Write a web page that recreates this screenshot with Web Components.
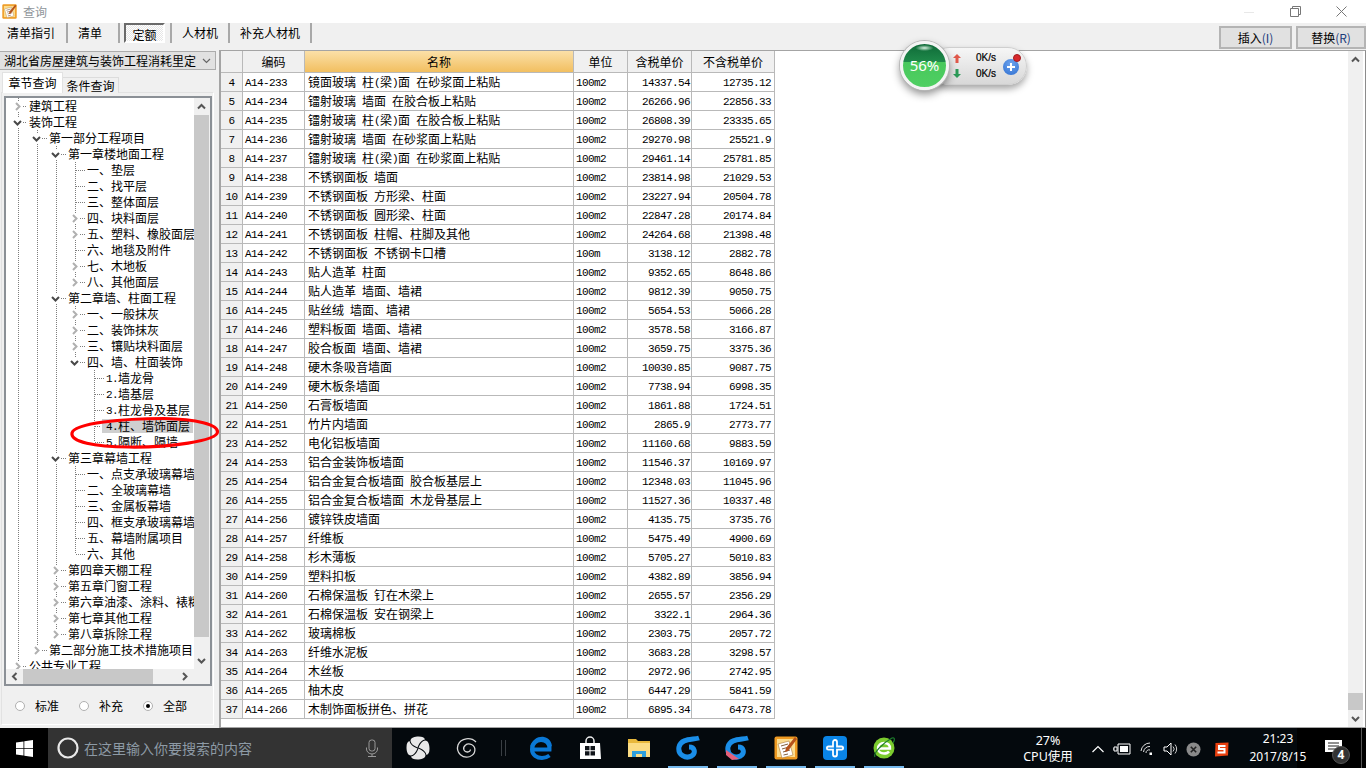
<!DOCTYPE html>
<html lang="zh"><head><meta charset="utf-8"><title>查询</title>
<style>
html,body{margin:0;padding:0;width:1366px;height:768px;overflow:hidden;background:#f0f0f0}
body{position:relative;display:flex;flex-direction:column;font:12px "Noto Sans CJK SC","Liberation Sans",sans-serif;color:#000}
</style></head><body>
<win-title></win-title>
<tool-bar></tool-bar>
<main-area></main-area>
<task-bar></task-bar>
<net-widget></net-widget>
<script>
const def=(name,html,init)=>customElements.define(name,class extends HTMLElement{
  constructor(){super();this.attachShadow({mode:'open'}).innerHTML=html;init&&init(this.shadowRoot,this)}
});
const chev=(d,c,w=2)=>{const p={d:'M1 3 4.5 6.5 8 3',u:'M1 6.5 4.5 3 8 6.5',r:'M3 1 6.5 4.5 3 8',l:'M6.5 1 3 4.5 6.5 8'}[d];
 return `<svg width="9" height="9" viewBox="0 0 9 9"><path d="${p}" fill="none" stroke="${c}" stroke-width="${w}"/></svg>`};
const esc=s=>s.replace(/[\x00-\x7f]+/g,m=>`<span class="l">${m}</span>`);
const latin=`.l{font-family:"Liberation Mono",monospace;font-size:11px;letter-spacing:-.6px;white-space:pre;vertical-align:1px;line-height:1}`;
const noteIcon=s=>`<svg width="${s}" height="${s}" viewBox="0 0 24 24"><rect x="0.5" y="0.5" width="23" height="23" rx="2" fill="#ee9a22"/><rect x="3" y="3" width="18" height="18" fill="#fbdc8e"/><path d="M4 8 15 5 19 19 8 22z" fill="#fff" stroke="#a87838" stroke-width=".6"/><path d="M7 10 14 8M8 13 15 11M9 16 16 14M9.5 19 14 18" stroke="#806040" stroke-width="1"/><path d="M21 1 23 3 14 15 11 16 12 12z" fill="#b5521b"/></svg>`;

def('win-title',`<style>
:host{display:flex;align-items:center;height:23px;background:#fff;flex:none}
.i{margin-left:2px;display:flex}.t{margin-left:6px;color:#8f959a;font-size:12px}
.c{margin-left:auto;display:flex;align-items:center;height:23px}
.c span{display:flex;width:46px;justify-content:center}
</style><span class="i">${noteIcon(15)}</span><span class="t">查询</span>
<div class="c"><span><svg width="10" height="10"><path d="M0 5.5H10" stroke="#e8e8e8"/></svg></span>
<span><svg width="11" height="11"><path d="M2.5 2.5V.5H10.5V8.5H8.5M.5 2.5H8.5V10.5H.5Z" fill="none" stroke="#777"/></svg></span>
<span style="margin-right:2px"><svg width="11" height="11"><path d="M.5.5 10.5 10.5M10.5.5.5 10.5" stroke="#777"/></svg></span></div>`);

def('tool-bar',`<style>
:host{display:flex;height:27px;background:#f0f0f0;flex:none;font-size:12px}
.it{box-sizing:border-box;height:20px;border-right:2px solid #a8a8a8;line-height:20px;white-space:nowrap}
.pr{box-sizing:border-box;width:41px;height:20px;margin-left:4px;text-align:center;line-height:20px;border:2px solid;border-color:#6a6a6a #fff #fff #6a6a6a;background:repeating-conic-gradient(#fff 0 25%,#e6e6e6 0 50%) 0 0/2px 2px}
.b{box-sizing:border-box;height:23px;margin-top:3px;border:2px solid #b4b4b4;background:#e1e1e1;text-align:center;line-height:19px}
.b b{font-weight:400;color:#1c3c7c}
</style>
<div class="it" style="width:68px;padding-left:7px">清单指引</div>
<div class="it" style="width:52px;padding-left:10px">清单</div>
<div class="it" style="width:52px"><div class="pr">定额</div></div>
<div class="it" style="width:58px;padding-left:10px">人材机</div>
<div class="it" style="width:82px;padding-left:10px">补充人材机</div>
<div class="b" style="width:73px;margin-left:907px">插入<b>(I)</b></div>
<div class="b" style="width:70px;margin-left:4px">替换<b>(R)</b></div>`);

def('main-area',`<style>:host{display:flex;height:678px;flex:none}</style><left-panel></left-panel><data-pane></data-pane>`);

def('left-panel',`<style>
:host{display:block;position:relative;width:219px;flex:none;background:#f0f0f0;height:678px}
.sel{box-sizing:border-box;width:216px;height:19px;margin-top:1px;background:#e1e1e1;border:1px solid #acacac;border-left:0;display:flex;align-items:center;padding-left:4px;white-space:nowrap}
.sel svg{margin-left:6px}
.tabs{display:flex;margin:2px 0 0 2px;height:21px;align-items:flex-end}
.tab{box-sizing:border-box;text-align:center}
.a{width:61px;height:21px;background:#fff;line-height:20px;border:1px solid #e2e2e2;border-bottom:0;position:relative;z-index:1}
.n{width:56px;height:16px;background:#f0f0f0;line-height:15px;border:1px solid #dcdcdc;border-left:0;border-bottom:0}
.page{box-sizing:border-box;width:213px;margin-left:1px;margin-top:-1px;height:633px;border:1px solid #e2e2e2;border-bottom-color:#fff;border-right-color:#fff;padding:3px 0 0 2px;background:#f0f0f0}
.rad{display:flex;height:39px;align-items:center;padding-left:11px}
.ring{position:absolute;left:69px;top:366px;z-index:5;display:block}
</style>
<div class="sel"><span>湖北省房屋建筑与装饰工程消耗里定</span>${chev('d','#666',1.2)}</div>
<div class="tabs"><div class="tab a">章节查询</div><div class="tab n">条件查询</div></div>
<div class="page"><tree-box></tree-box>
<div class="rad"><radio-opt>标准</radio-opt><radio-opt>补充</radio-opt><radio-opt checked>全部</radio-opt></div></div>
<svg class="ring" width="152" height="34"><path d="M3 17C5 7 55 2.500 95 2.500 128 3 149 9 148.500 16 148 25 100 31.500 60 31 25 30.500 1.500 26 3 17Z" fill="none" stroke="#f00" stroke-width="3.200"/></svg>`);

def('radio-opt',`<style>
:host{display:flex;align-items:center;width:64px}
.c{box-sizing:border-box;width:10px;height:10px;border:1px solid #b0b0b0;border-radius:50%;background:#fff;display:flex;align-items:center;justify-content:center;margin-right:10px}
.d{width:4px;height:4px;border-radius:50%;background:#000;display:none}
:host([checked]) .d{display:block}
</style><span class="c"><span class="d"></span></span><slot></slot>`);

const TREE=[[0,'建筑工程','c'],[0,'装饰工程','e'],[1,'第一部分工程项目','e'],[2,'第一章楼地面工程','e'],
[3,'一、垫层'],[3,'二、找平层'],[3,'三、整体面层'],[3,'四、块料面层','c'],[3,'五、塑料、橡胶面层','c'],[3,'六、地毯及附件'],[3,'七、木地板','c'],[3,'八、其他面层','c'],
[2,'第二章墙、柱面工程','e'],[3,'一、一般抹灰','c'],[3,'二、装饰抹灰','c'],[3,'三、镶贴块料面层','c'],[3,'四、墙、柱面装饰','e'],
[4,'1.墙龙骨'],[4,'2.墙基层'],[4,'3.柱龙骨及基层'],[4,'4.柱、墙饰面层',0,1],[4,'5.隔断、隔墙'],
[2,'第三章幕墙工程','e'],[3,'一、点支承玻璃幕墙'],[3,'二、全玻璃幕墙'],[3,'三、金属板幕墙'],[3,'四、框支承玻璃幕墙'],[3,'五、幕墙附属项目'],[3,'六、其他'],
[2,'第四章天棚工程','c'],[2,'第五章门窗工程','c'],[2,'第六章油漆、涂料、裱糊工程','c'],[2,'第七章其他工程','c'],[2,'第八章拆除工程','c'],
[1,'第二部分施工技术措施项目','c'],[0,'公共专业工程','c']];
const TX=[29,49,68,87,106];
const hasNext=(i)=>{const L=TREE[i][0];for(let j=i+1;j<TREE.length;j++){if(TREE[j][0]<L)return false;if(TREE[j][0]==L)return true}return false};
function treeHTML(){
 const anc=[];let out='';
 TREE.forEach((n,i)=>{const [L,t,ex,sel]=n;anc[L]=i;
  const bg=[];const dot='repeating-linear-gradient(#7d7d7d 0 1px,transparent 1px 2px)';
  for(let d=0;d<L;d++){if(hasNext(anc[d]))bg.push(`${dot} ${12+19*d}px 0/1px 100% no-repeat`)}
  if(i>0||hasNext(i))bg.push(`${dot} ${12+19*L}px 0/1px ${hasNext(i)?'100%':'8px'} no-repeat`);
  const gx=12+19*L,tx=TX[L]-6;
  let pre;
  const sp=w=>`<span style="flex:none;width:${w}px"></span>`;
  const hd=w=>`<span class="h" style="width:${w}px"></span>`;
  const lbl=sel?4:0;
  if(ex){pre=sp(gx-6)+`<span class="e">${ex=='c'?chev('r','#b0b0b0',2):chev('d','#484848',2)}</span>`+hd(tx-gx-5-lbl-2)+sp(2)}
  else{pre=sp(gx+1)+hd(tx-gx-2-lbl)+sp(1)}
  out+=`<div class="row" style="background:${bg.join(',')}">${pre}<span class="t${sel?' s':''}">${esc(t)}</span></div>`;
 });return out}
def('tree-box',`<style>
:host{display:block;box-sizing:border-box;width:208px;height:590px;border:2px solid #8b9096;background:#f0f0f0}
.top{display:flex;height:571px}
.tree{width:188px;height:571px;overflow:hidden;background:#fff;flex:none}
.row{display:flex;align-items:center;height:16px;white-space:nowrap;line-height:16px}
.e{flex:none;width:11px;height:11px;background:#fff;display:flex;align-items:center;justify-content:center}
.h{flex:none;height:1px;background:repeating-linear-gradient(90deg,#7d7d7d 0 1px,transparent 1px 2px)}
.t{flex:none}.s{background:#cfcfcf;padding:0 3px 0 4px;height:14px;line-height:14px}
.bot{display:flex;height:15px}
.vs{width:15px;display:flex;flex-direction:column;background:#f0f0f0}
.ar{flex:none;height:17px;display:flex;align-items:center;justify-content:center}
.th{background:#c8c8c8;flex:none}
.hs{width:188px;display:flex;background:#f0f0f0}
.hs .ar{width:17px;height:15px}
${latin}
</style>
<div class="top"><div class="tree">${treeHTML()}</div>
<div class="vs"><div class="ar">${chev('u','#555')}</div><div class="th" style="height:522px"></div><div style="flex:1"></div><div class="ar">${chev('d','#555')}</div></div></div>
<div class="bot"><div class="hs"><div class="ar">${chev('l','#555')}</div><div class="th" style="width:130px"></div><div style="flex:1"></div><div class="ar" style="margin-right:1px">${chev('r','#555')}</div></div></div>`);

const ROWS=`4|233|镜面玻璃 柱(梁)面 在砂浆面上粘贴|100m2|14337.54|12735.12
5|234|镭射玻璃 墙面 在胶合板上粘贴|100m2|26266.96|22856.33
6|235|镭射玻璃 柱(梁)面 在胶合板上粘贴|100m2|26808.39|23335.65
7|236|镭射玻璃 墙面 在砂浆面上粘贴|100m2|29270.98|25521.9
8|237|镭射玻璃 柱(梁)面 在砂浆面上粘贴|100m2|29461.14|25781.85
9|238|不锈钢面板 墙面|100m2|23814.98|21029.53
10|239|不锈钢面板 方形梁、柱面|100m2|23227.94|20504.78
11|240|不锈钢面板 圆形梁、柱面|100m2|22847.28|20174.84
12|241|不锈钢面板 柱帽、柱脚及其他|100m2|24264.68|21398.48
13|242|不锈钢面板 不锈钢卡口槽|100m|3138.12|2882.78
14|243|贴人造革 柱面|100m2|9352.65|8648.86
15|244|贴人造革 墙面、墙裙|100m2|9812.39|9050.75
16|245|贴丝绒 墙面、墙裙|100m2|5654.53|5066.28
17|246|塑料板面 墙面、墙裙|100m2|3578.58|3166.87
18|247|胶合板面 墙面、墙裙|100m2|3659.75|3375.36
19|248|硬木条吸音墙面|100m2|10030.85|9087.75
20|249|硬木板条墙面|100m2|7738.94|6998.35
21|250|石膏板墙面|100m2|1861.88|1724.51
22|251|竹片内墙面|100m2|2865.9|2773.77
23|252|电化铝板墙面|100m2|11160.68|9883.59
24|253|铝合金装饰板墙面|100m2|11546.37|10169.97
25|254|铝合金复合板墙面 胶合板基层上|100m2|12348.03|11045.96
26|255|铝合金复合板墙面 木龙骨基层上|100m2|11527.36|10337.48
27|256|镀锌铁皮墙面|100m2|4135.75|3735.76
28|257|纤维板|100m2|5475.49|4900.69
29|258|杉木薄板|100m2|5705.27|5010.83
30|259|塑料扣板|100m2|4382.89|3856.94
31|260|石棉保温板 钉在木梁上|100m2|2655.57|2356.29
32|261|石棉保温板 安在钢梁上|100m2|3322.1|2964.36
33|262|玻璃棉板|100m2|2303.75|2057.72
34|263|纤维水泥板|100m2|3683.28|3298.57
35|264|木丝板|100m2|2972.96|2742.95
36|265|柚木皮|100m2|6447.29|5841.59
37|266|木制饰面板拼色、拼花|100m2|6895.34|6473.78`.split('\n').map(r=>r.split('|'));
def('data-pane',`<style>
:host{display:flex;box-sizing:border-box;width:1147px;height:678px;background:#fff;border-left:2px solid #a4a4a4;border-top:1px solid #a4a4a4;border-bottom:1px solid #a4a4a4;border-right:1px solid #8c8c8c;flex:none}
.g{display:grid;grid-template-columns:22px 62px 269px 54px 64px 83px;grid-template-rows:22px;grid-auto-rows:19px;width:554px;flex:none;align-self:flex-start}
.g>div{box-sizing:border-box;border-right:1px solid #b9b9b9;border-bottom:1px solid #b9b9b9;line-height:17px;white-space:nowrap;overflow:hidden}
.g>.h{background:#f0f0f0;text-align:center;height:22px;line-height:21px}
.g>.hn{background:linear-gradient(#fbe0a8,#f2bf60)}
.r{background:#f0f0f0;text-align:center}
.c{padding-left:2px}.n{padding-left:3px}.u{padding-left:2px}
.p{text-align:right;padding-right:1px}.q{text-align:right;padding-right:3px}
.s{margin-left:auto;margin-right:2px;width:15px;background:#f0f0f0;display:flex;flex-direction:column}
.ar{height:17px;display:flex;align-items:center;justify-content:center;flex:none}
.th{height:17px;background:#c8c8c8;margin-top:auto;flex:none}
${latin}
</style><div class="g">
<div class="h"></div><div class="h">编码</div><div class="h hn">名称</div><div class="h">单位</div><div class="h">含税单价</div><div class="h">不含税单价</div>
${ROWS.map(r=>`<div class="r">${esc(r[0])}</div><div class="c">${esc('A14-'+r[1])}</div><div class="n">${esc(r[2])}</div><div class="u">${esc(r[3])}</div><div class="p">${esc(r[4])}</div><div class="q">${esc(r[5])}</div>`).join('')}
</div><div class="s"><div class="ar">${chev('u','#555')}</div><div class="th"></div><div class="ar">${chev('d','#555')}</div></div>`);

const IC={
wind:`<svg width="24" height="24" viewBox="0 0 24 24"><g fill="#e8e8e8">${[0,90,180,270].map(a=>`<path transform="rotate(${a} 12 12)" d="M11.500 11.500C7.500 9.500 5 8 4.500 5 4.500 1.500 9 .5 12.500 .5 16.500 .5 18.500 1.500 19 3.500 16 4 13 7 11.500 11.500Z"/>`).join('')}</g></svg>`,
swirl:`<svg width="24" height="24" viewBox="0 0 24 24"><path d="M21 6C16 1 6 1.500 3 9 .5 17 8 23 15 20.500 21 18 21.500 11 16.500 8.500 11.500 6.500 7.500 10.500 9 14 10.500 17 15 16.500 15.500 13.500" fill="none" stroke="#d8d8d8" stroke-width="1.300"/></svg>`,
edge:`<svg width="24" height="24" viewBox="0 0 24 24"><path d="M4 13.500H20.500C21 7 16.500 4 12 4 7.500 4 3 7.500 3 13.500 3 19 8 22 13 22 16 22 18.500 21 20.500 19.500" fill="none" stroke="#0a78d6" stroke-width="4"/><path d="M1 11C3 3 10 0 15 1 20 2 23 6 23 11 20 6 14 3 9 5 5 7 3 9 1 11Z" fill="#0a78d6"/></svg>`,
store:`<svg width="24" height="24" viewBox="0 0 24 24"><path d="M8 7V5A4 4 0 0 1 16 5V7" fill="none" stroke="#eee" stroke-width="1.500"/><path d="M2 7H22L23 23H2Z" fill="#fff"/><path d="M7 10H11.500V14.300H7ZM12.500 10H17V14.300H12.500ZM7 15.300H11.500V19.500H7ZM12.500 15.300H17V19.500H12.500Z" fill="#10151a"/></svg>`,
folder:`<svg width="24" height="24" viewBox="0 0 24 24"><path d="M1 3H9L11 5H23V8H1Z" fill="#e8b83c"/><path d="M1 7H23V21H1Z" fill="#fbdc84"/><path d="M5 15H19V21H15V18H9V21H5Z" fill="#2e9fdc"/></svg>`,
g1:`<svg width="26" height="26" viewBox="0 0 26 26"><path d="M24 3C18 5 6 3 4 12 2.500 20 11 24 16.500 21 21 18 20 12 14 12" fill="none" stroke="#1a8ee8" stroke-width="5"/></svg>`,
g2:`<svg width="26" height="26" viewBox="0 0 26 26"><path d="M24 3C18 5 6 3 4 12 2.500 20 11 24 16.500 21 21 18 20 12 14 12" fill="none" stroke="#1a8ee8" stroke-width="5"/><path d="M2 15 15 24 8 25 2 20Z" fill="#e4607a"/></svg>`,
cross:`<svg width="24" height="24" viewBox="0 0 24 24"><rect width="24" height="24" rx="4" fill="#0a84e6"/><path d="M10 6a2 2 0 0 1 4 0V10.500H18.500a1.600 1.600 0 0 1 0 3.200H14V18.500a2 2 0 0 1-4 0V13.700H5.500a1.600 1.600 0 0 1 0-3.200H10Z" fill="none" stroke="#fff" stroke-width="1.800"/></svg>`,
ie:`<svg width="24" height="24" viewBox="0 0 24 24"><circle cx="12" cy="12" r="10.500" fill="#7ccb2e"/><path d="M6 12.500H18C18 8 15 7 12 7 9 7 6 9 6 12.500 6 16 9 17.500 12 17.500 14 17.500 16 17 17 15.500" fill="none" stroke="#fff" stroke-width="2.400"/><path d="M3 21C1 18 9 8 20 2 23 1 23 4 21 7" fill="none" stroke="#1c7c2c" stroke-width="1.200"/></svg>`};
def('task-bar',`<style>
:host{display:flex;height:40px;flex:none;color:#fff;background:linear-gradient(90deg,#04090d 1297px,#000 1297px,#000 1361px,#555 1361px,#555 1362px,#000 1362px);font-family:"Noto Sans","Noto Sans CJK SC",sans-serif}
.st{width:48px;background:#000;display:flex;align-items:center;justify-content:center;flex:none}
.se{width:344px;background:#333;display:flex;align-items:center;flex:none;position:relative}
.se .q{margin-left:8px;display:flex}
.se .t{margin-left:4px;font-size:14px;color:#8d9aa5;font-family:"Noto Sans CJK SC",sans-serif;white-space:nowrap}
.se .m{margin-left:auto;margin-right:13px;display:flex}
.sp{flex:none}
.ic{width:49px;height:40px;display:flex;flex-direction:column;align-items:center;flex:none}
.ic .k{height:24px;margin-top:8px;display:flex;align-items:center;justify-content:center}
.ic i{margin-top:auto;width:40px;height:2px;background:#76b9ed;display:block}
.sep{width:25px;flex:none;display:flex;align-items:center;justify-content:center}
.sep span{width:3px;height:16px;border-left:1px solid #3a3f44;border-right:1px solid #3a3f44;margin-right:1px}
.cpu{width:60px;margin-left:110px;flex:none;text-align:center;line-height:16px;font-size:12.5px;padding-top:5px;box-sizing:border-box}
.tr{flex:none;height:40px;display:flex;align-items:center;justify-content:center;padding-top:2px;box-sizing:border-box}
.clk{width:74px;flex:none;text-align:center;line-height:18px;font-size:12px;box-sizing:border-box;padding-top:2px;white-space:nowrap}
.nt{width:36px;flex:none;display:flex;justify-content:center;position:relative;box-sizing:border-box;padding-top:12px}
.b{position:absolute;left:17px;top:18px;box-sizing:border-box;width:18px;height:18px;border-radius:50%;background:#333;border:1px solid #555;font:700 12px/16px "Noto Sans",sans-serif;text-align:center;color:#fff}
</style>
<div class="st"><svg width="17" height="17" viewBox="0 0 17 17"><path d="M0 2.500 7.500 1.400V8H0ZM8.300 1.300 17 0V8H8.300ZM0 8.800H7.500V15.500L0 14.400ZM8.300 8.800H17V17L8.300 15.700Z" fill="#fff"/></svg></div>
<div class="se"><span class="q"><svg width="24" height="24"><circle cx="12" cy="12" r="9.500" fill="none" stroke="#e8e8e8" stroke-width="2.200"/></svg></span><span class="t">在这里输入你要搜索的内容</span>
<span class="m"><svg width="14" height="18" viewBox="0 0 14 18"><rect x="4" y="1" width="6" height="11" rx="2.500" fill="none" stroke="#9a9a9a"/><path d="M1.500 8.500V10A5.500 5 0 0 0 12.500 10V8.500M7 15V17M3 17.500H11" fill="none" stroke="#9a9a9a"/></svg></span></div>
<div class="sp" style="width:1px"></div>
<div class="ic"><span class="k">${IC.wind}</span></div><div class="ic"><span class="k">${IC.swirl}</span></div>
<div class="sep"><span></span></div>
<div class="ic"><span class="k">${IC.edge}</span></div><div class="ic"><span class="k">${IC.store}</span></div><div class="ic"><span class="k">${IC.folder}</span></div>
<div class="ic"><span class="k">${IC.g1}</span><i></i></div><div class="ic"><span class="k">${IC.g2}</span><i></i></div><div class="ic"><span class="k">${noteIcon(24)}</span><i></i></div><div class="ic"><span class="k">${IC.cross}</span><i></i></div><div class="ic"><span class="k">${IC.ie}</span><i></i></div>
<div class="cpu">27%<br><span style="font-family:'Noto Sans','Noto Sans CJK SC',sans-serif">CPU使用</span></div>
<div class="tr" style="width:24px;margin-left:8px"><svg width="12" height="8"><path d="M.5 7 6 1.500 11.500 7" fill="none" stroke="#fff" stroke-width="1.200"/></svg></div>
<div class="tr" style="width:24px"><svg width="18" height="12" viewBox="0 0 18 12"><path d="M5 1H17V11H5ZM1 4V8H4V4ZM0 6H1" fill="none" stroke="#fff"/><rect x="7" y="3" width="8" height="6" fill="#fff"/></svg></div>
<div class="tr" style="width:25px"><svg width="14" height="14" viewBox="0 0 14 14"><path d="M1 9A9 9 0 0 1 10 1M3.500 10A6 6 0 0 1 10 4.500M6 11A3 3 0 0 1 10 8" fill="none" stroke="#e0e0e0"/><rect x="9.500" y="10.500" width="2.500" height="2.500" fill="#fff"/></svg></div>
<div class="tr" style="width:23px"><svg width="16" height="14" viewBox="0 0 16 14"><path d="M1 5H4L8 1V13L4 9H1Z" fill="none" stroke="#fff"/><path d="M10 4.500A3.500 3.500 0 0 1 10 9.500M12 2.500A7 7 0 0 1 12 11.500" fill="none" stroke="#ccc"/></svg></div>
<div class="tr" style="width:23px"><svg width="15" height="15" viewBox="0 0 15 15"><circle cx="7.500" cy="7.500" r="7" fill="#8a8a8a"/><path d="M4.800 4.800 10.200 10.200M10.200 4.800 4.800 10.200" stroke="#222" stroke-width="1.600"/></svg></div>
<div class="tr" style="width:28px;padding-left:4px"><svg width="15" height="15" viewBox="0 0 15 15"><path d="M1.500 1 14.500 .5 14 13.500 1 14.500Z" fill="#e8400f"/><path d="M11.500 4H5V7H10.500V10.500H3.500" fill="none" stroke="#fff" stroke-width="2"/></svg></div>
<div class="clk" style="margin-left:8px">21:23<br>2017/8/15</div>
<div class="nt"><svg width="17" height="16" viewBox="0 0 17 16"><path d="M0 0H17V12H10L8 15V12H0Z" fill="#fff"/><path d="M3 3H14M3 6H14M3 9H10" stroke="#222"/></svg><span class="b">4</span></div>`);

def('net-widget',`<style>
:host{position:absolute;left:900px;top:41px;width:130px;height:52px;z-index:6;display:block;font-family:"Liberation Sans",sans-serif}
.p{box-sizing:border-box;margin-left:30px;margin-top:6px;width:97px;height:38px;border-radius:19px;background:linear-gradient(#f6f6f6,#d8d8d8);border:1px solid #cfcfcf;box-shadow:0 4px 7px rgba(0,0,0,.35);display:flex;align-items:center;padding-left:22px}
.a{display:flex;flex-direction:column;gap:6px;width:14px;flex:none}
.a svg{display:block}
.s{width:29px;text-align:right;font-size:10px;line-height:16px;color:#000;flex:none;-webkit-text-stroke:.2px #000}
.pl{position:relative;margin-left:7px;margin-top:2px;width:16px;height:16px;border-radius:50%;background:radial-gradient(circle at 50% 30%,#6ea4ee,#2f6fd0);display:flex;align-items:center;justify-content:center}
.dot{position:absolute;left:10px;top:-5px;width:8px;height:8px;border-radius:50%;background:#d8282c;border:1px solid #a01c20;box-sizing:border-box}
.ball{position:absolute;left:0;top:0;box-sizing:border-box;width:49px;height:49px;border-radius:50%;border:3px solid #f4f4f4;box-shadow:0 0 0 1px #b8b8b8,0 4px 8px rgba(0,0,0,.45);background:radial-gradient(ellipse 9px 3px at 50% 4px,#d8f0e0,transparent),linear-gradient(#0f6a38 0,#1f8a4a 18px,#48c85c 18px,#4fcf62 100%);color:#fff;font-size:15px;line-height:43px;text-align:center;font-family:"Noto Sans",sans-serif}
</style>
<div class="p"><div class="a"><svg width="8" height="9" viewBox="0 0 8 9"><path d="M4 0 8 4H5.500V9H2.500V4H0Z" fill="#e0584a"/></svg><svg width="8" height="9" viewBox="0 0 8 9"><path d="M4 9 8 5H5.500V0H2.500V5H0Z" fill="#2c9a58"/></svg></div>
<div class="s">0K/s<br>0K/s</div>
<div class="pl"><svg width="10" height="10"><path d="M5 1V9M1 5H9" stroke="#fff" stroke-width="2"/></svg><span class="dot"></span></div></div>
<div class="ball">56%</div>`);
</script>
</body></html>
